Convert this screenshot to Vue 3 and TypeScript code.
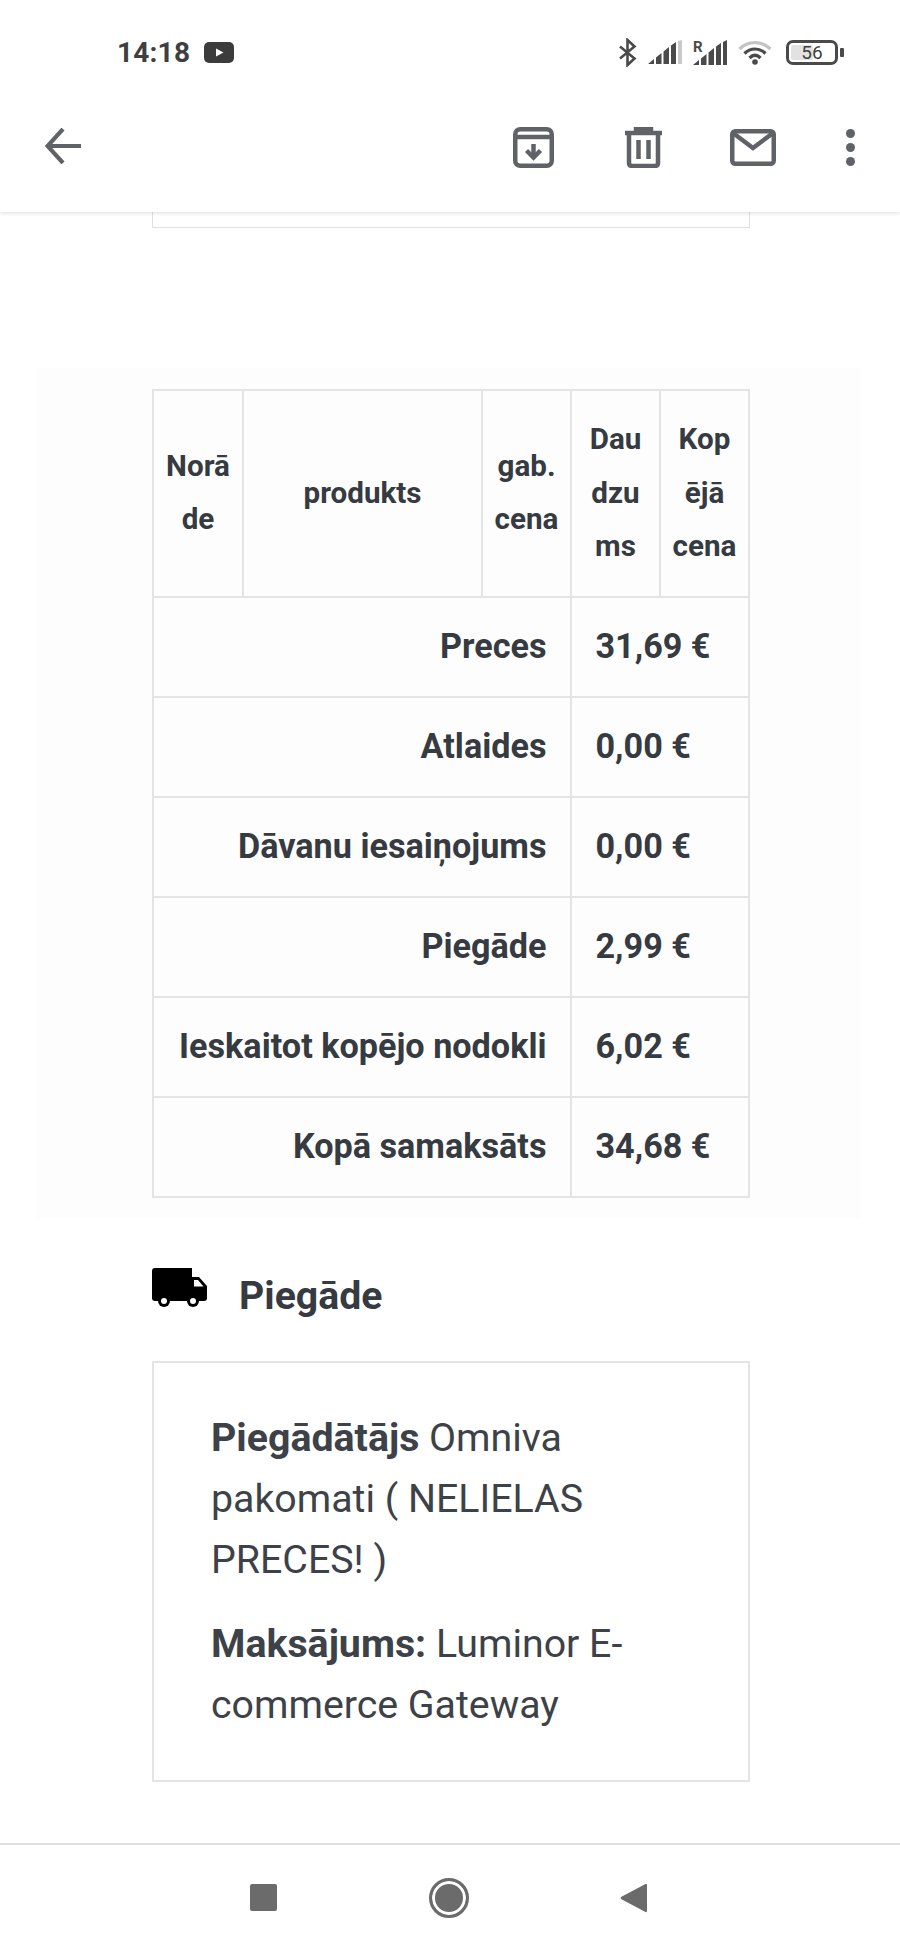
<script setup lang="ts">
interface Row { label: string; value: string }
const rows: Row[] = [
  { label: 'Preces', value: '31,69 €' },
  { label: 'Atlaides', value: '0,00 €' },
  { label: 'Dāvanu iesaiņojums', value: '0,00 €' },
  { label: 'Piegāde', value: '2,99 €' },
  { label: 'Ieskaitot kopējo nodokli', value: '6,02 €' },
  { label: 'Kopā samaksāts', value: '34,68 €' },
]
</script>

<template>
  <div class="page">
    <header class="top">
      <div class="status">
        <div class="status-left">
          <span class="time">14:18</span>
          <svg class="yt" width="30" height="21" viewBox="0 0 30 21">
            <rect width="30" height="21" rx="5" fill="#3c3c3c" />
            <path d="M12 6.5 L19.5 10.5 L12 14.5 Z" fill="#fff" />
          </svg>
        </div>
        <div class="status-right">
          <svg width="19" height="29" viewBox="0 0 19 29" fill="none" stroke="#4a4a4a" stroke-width="2.6">
            <path d="M2 8.5 L16.5 20.5 L9.5 27 V2 L16.5 8.5 L2 20.5" />
          </svg>
          <svg width="34" height="24" viewBox="0 0 34 24">
            <path d="M0 24 L6 19 V24 Z M8 17.500 L13.500 13 V24 H8 Z M15.500 11.500 L21 7 V24 H15.500 Z M23 5.500 L28 2 V24 H23 Z" fill="#4a4a4a" />
            <path d="M30 1 L34 0 V24 H30 Z" fill="#c9c9c9" />
          </svg>
          <svg width="34" height="26" viewBox="0 0 34 26">
            <path d="M0 26 L6 21 V26 Z M8 19.500 L13.500 15 V26 H8 Z M15.500 13.500 L21 9 V26 H15.500 Z M23 7.500 L28 4 V26 H23 Z M30 3 L34 1 V26 H30 Z" fill="#4a4a4a" />
            <text x="0" y="13" class="roam">R</text>
          </svg>
          <svg width="34" height="26" viewBox="0 0 34 26" fill="none" stroke-width="3.2">
            <path d="M1.500 10 C10 1.500 24 1.500 32.500 10" stroke="#c4c4c4" />
            <path d="M6.500 14.500 C12.500 8.500 21.500 8.500 27.500 14.500" stroke="#4a4a4a" />
            <path d="M11.500 19 C15 15.500 19 15.500 22.500 19" stroke="#4a4a4a" />
            <circle cx="17" cy="23" r="2.800" fill="#4a4a4a" stroke="none" />
          </svg>
          <div class="battery-wrap">
            <div class="battery">
              <div class="battery-level"></div>
              <span class="battery-text">56</span>
            </div>
            <div class="battery-nub"></div>
          </div>
        </div>
      </div>
      <div class="appbar">
        <svg class="back" width="36" height="36" viewBox="0 0 36 36" fill="none" stroke="#5f6368" stroke-width="4.200">
          <path d="M36 18 H3 M18 1 L2.500 18 L18 35" />
        </svg>
        <div class="actions">
          <svg class="a-archive" width="41" height="41" viewBox="0 0 41 41" fill="none" stroke="#5f6368" stroke-width="4.500">
            <rect x="2.250" y="2.250" width="36.500" height="36.500" rx="5" />
            <path d="M2 10 H39" />
            <path d="M20.500 17 V29" />
            <path d="M13.500 23.500 L20.500 30.500 L27.500 23.500" />
          </svg>
          <svg class="a-trash" width="37" height="41" viewBox="0 0 37 41" fill="none" stroke="#5f6368" stroke-width="4.500">
            <path d="M0 6 H37 M11 4 V2 H26 V4" />
            <path d="M4 6 V36 Q4 39 7 39 H30 Q33 39 33 36 V6" />
            <path d="M13.500 13 V32 M23.500 13 V32" />
          </svg>
          <svg class="a-mail" width="46" height="37" viewBox="0 0 46 37" fill="none" stroke="#5f6368" stroke-width="4.500">
            <rect x="2.250" y="2.250" width="41.500" height="32.500" rx="3" />
            <path d="M3 4 L23 19 L43 4" />
          </svg>
          <svg class="a-more" width="9" height="37" viewBox="0 0 9 37" fill="#5f6368">
            <circle cx="4.500" cy="4.500" r="4.500" />
            <circle cx="4.500" cy="18.500" r="4.500" />
            <circle cx="4.500" cy="32.500" r="4.500" />
          </svg>
        </div>
      </div>
    </header>

    <main class="content">
      <div class="prev-box"></div>

      <section class="panel">
        <table class="order">
          <colgroup>
            <col class="c1" /><col class="c2" /><col class="c3" /><col class="c4" /><col class="c5" />
          </colgroup>
          <thead>
            <tr>
              <th>Norā<br />de</th>
              <th>produkts</th>
              <th>gab.<br />cena</th>
              <th>Dau<br />dzu<br />ms</th>
              <th>Kop<br />ējā<br />cena</th>
            </tr>
          </thead>
          <tbody>
            <tr v-for="r in rows" :key="r.label">
              <td class="label" colspan="3">{{ r.label }}</td>
              <td class="value" colspan="2">{{ r.value }}</td>
            </tr>
          </tbody>
        </table>
      </section>

      <section class="shipping">
        <div class="ship-head">
          <svg class="truck" width="56" height="40" viewBox="0 0 56 40">
            <path d="M3 1 H40 V6 V34 H3 Q0 34 0 31 V4 Q0 1 3 1 Z" fill="#000" />
            <path d="M40 10 H47 L55 19 V31 Q55 34 52 34 H40 Z" fill="#000" />
            <path d="M42 13 H46 L51.500 19.500 H42 Z" fill="#fff" />
            <circle cx="12" cy="34" r="6" fill="#000" />
            <circle cx="12" cy="34" r="3" fill="#fff" />
            <circle cx="41" cy="34" r="6" fill="#000" />
            <circle cx="41" cy="34" r="3" fill="#fff" />
          </svg>
          <h3 class="ship-title">Piegāde</h3>
        </div>
        <div class="ship-box">
          <p><strong>Piegādātājs</strong> Omniva pakomati ( NELIELAS PRECES! )</p>
          <p><strong>Maksājums:</strong> Luminor E-commerce Gateway</p>
        </div>
      </section>
    </main>

    <nav class="nav">
      <span class="nav-square"></span>
      <span class="nav-home"></span>
      <svg width="27" height="30" viewBox="0 0 27 30">
        <path d="M25.500 1 Q27 0.500 27 2 V28 Q27 29.500 25.500 29 L1 16 Q0 15 1 14 Z" fill="#6b6b6b" />
      </svg>
    </nav>
  </div>
</template>

<style>
body { margin: 0; background: #fff; }
</style>

<style scoped>
.page {
  width: 900px;
  height: 1950px;
  display: flex;
  flex-direction: column;
  overflow: hidden;
  font-family: Roboto, "Liberation Sans", sans-serif;
  color: #363a41;
  background: #fff;
}
.top {
  height: 212px;
  flex: none;
  display: flex;
  flex-direction: column;
  background: #fff;
  box-shadow: 0 1px 4px rgba(0, 0, 0, 0.14);
  position: relative;
  z-index: 2;
}
.status {
  height: 104px;
  flex: none;
  display: flex;
  justify-content: space-between;
  align-items: center;
  padding: 0 56px 0 117px;
  box-sizing: border-box;
}
.status-left { display: flex; align-items: center; gap: 14px; }
.time { font-size: 28px; font-weight: 700; color: #3f3f3f; letter-spacing: 0.2px; }
.status-right { display: flex; align-items: center; gap: 11px; }
.roam { font-size: 15px; font-weight: 700; fill: #4a4a4a; font-family: Roboto, sans-serif; }
.battery-wrap { display: flex; align-items: center; gap: 2px; margin-left: 3px; }
.battery {
  width: 52px;
  height: 25px;
  box-sizing: border-box;
  border: 3px solid #4a4a4a;
  border-radius: 7px;
  position: relative;
  display: flex;
  align-items: center;
  justify-content: center;
}
.battery-level {
  position: absolute;
  left: 2px;
  top: 2px;
  bottom: 2px;
  width: 22px;
  background: #e2e2e2;
  border-radius: 2px;
}
.battery-text { position: relative; font-size: 19px; color: #3f3f3f; line-height: 1; }
.battery-nub { width: 4px; height: 9px; background: #4a4a4a; border-radius: 1px; }
.appbar {
  flex: 1;
  display: flex;
  justify-content: space-between;
  padding: 24px 45px 0 45px;
}
.actions { display: flex; align-items: flex-start; }
.a-archive { margin-top: -1px; }
.a-trash { margin-top: -1px; margin-left: 71px; }
.a-mail { margin-top: 1px; margin-left: 68px; }
.a-more { margin-top: 1px; margin-left: 70px; }

.content { flex: 1; display: flex; flex-direction: column; }
.prev-box {
  height: 16px;
  width: 598px;
  box-sizing: border-box;
  margin-left: 152px;
  border: 1px solid #dfdfdf;
  border-top: none;
}
.panel {
  margin: 140px 38px 0 35px;
  padding: 21px 110px 21px 117px;
  background: #fdfdfd;
}
.order {
  width: 598px;
  table-layout: fixed;
  border-collapse: collapse;
  font-size: 34.2px;
  line-height: 53.33px;
  color: #363a41;
}
.c1 { width: 90px; }
.c2 { width: 239px; }
.c3, .c4, .c5 { width: 89px; }
.order th, .order td {
  border: 2px solid #e4e4e4;
  padding: 22.33px 0;
  font-weight: 700;
}
.order th { text-align: center; font-size: 29.6px; }
.order .label { text-align: right; padding-right: 23.5px; }
.order .value { text-align: left; padding-left: 23.5px; }

.shipping { padding: 48px 150px 0 152px; }
.ship-head { display: flex; align-items: flex-start; }
.truck { flex: none; }
.ship-title {
  margin: 0 0 0 31px;
  font-size: 39.2px;
  line-height: 58px;
  font-weight: 700;
  color: #363a41;
}
.ship-box {
  margin-top: 36px;
  border: 2px solid #e4e4e4;
  padding: 45px 56px 44px 57px;
  font-size: 39.3px;
  line-height: 61px;
  color: #3d4148;
}
.ship-box p { margin: 0 0 23px; }
.ship-box p:last-child { margin-bottom: 0; }
.ship-box strong { font-weight: 700; }

.nav {
  height: 107px;
  flex: none;
  box-sizing: border-box;
  border-top: 2px solid #dedede;
  display: flex;
  align-items: center;
  padding: 0 253px 0 250px;
  justify-content: space-between;
  background: #fff;
}
.nav-square { width: 27px; height: 27px; background: #6b6b6b; border-radius: 2px; }
.nav-home {
  width: 40px;
  height: 40px;
  box-sizing: border-box;
  border-radius: 50%;
  background: #6b6b6b;
  border: 3px solid #6b6b6b;
  box-shadow: inset 0 0 0 3px #fff;
}
</style>
